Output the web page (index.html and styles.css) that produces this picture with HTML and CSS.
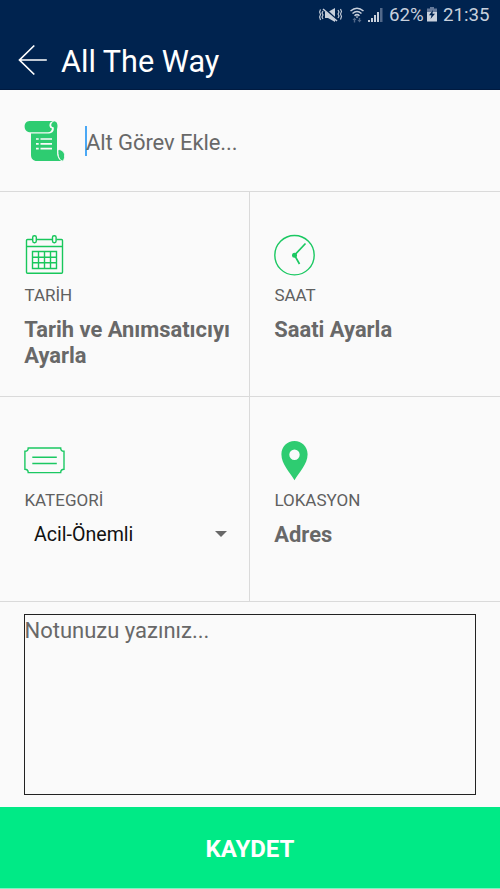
FILE: index.html
```html
<!DOCTYPE html>
<html lang="tr">
<head>
<meta charset="utf-8">
<title>All The Way</title>
<link rel="stylesheet" href="styles.css">
</head>
<body>
<div class="app">
  <header class="header">
    <div class="status">
      <svg class="mute" width="24" height="16" viewBox="0 0 24 16"><path fill="currentColor" d="M6 5h3l7-4v14l-7-4H6z"/><path stroke="#00234f" stroke-width="2" d="M5 1l14 13"/><path fill="none" stroke="currentColor" stroke-width="1.6" d="M4 2l14 12"/><path fill="none" stroke="currentColor" stroke-width="1.1" d="M4 4L3 6l1 2-1 2 1 2M1.5 2.500L.6 5l.9 2.500L.6 10l.9 3M19 3l1 2-1 2 1 2-1 2M21.500 2l1 2.500-1 2.500 1 2.500-1 3"/></svg>
      <svg class="wifi" width="14" height="16" viewBox="0 0 14 16"><g fill="none" stroke="currentColor" stroke-width="1.500"><path d="M.5 4Q7-1.500 13.500 4M2.500 6.500q4.500-4 9 0M4.500 8.700q2.500-2.200 5 0"/></g><path fill="currentColor" d="M5.500 9.500h3L7 11.200z"/><path fill="#52698a" d="M2.500 13L4.500 10.500 6.500 13H5.200v2.500H3.800V13zM7.500 13h1.300v-2h1.400v2h1.300l-2 2.500z"/></svg>
      <svg class="signal" width="15" height="15" viewBox="0 0 15 15"><path fill="currentColor" d="M0 13h2v2H0zM3 11h2v4H3zM6 8h2v7H6zM9 5h2v10H9z"/><path fill="#52698a" d="M12 1h2.500v14H12z"/></svg>
      <span class="percent">62%</span>
      <svg class="battery" width="10" height="15" viewBox="0 0 10 15"><path fill="#65799a" d="M3 0h4v1.500h3V5H0V1.500h3z"/><path fill="currentColor" d="M0 5h10v9.500H0z"/><path fill="#00234f" d="M6 3L2 8.200h2.500L3.500 12 8 6.700H5.500z"/></svg>
      <span class="clock">21:35</span>
    </div>
    <div class="titlebar">
      <svg class="back" width="30" height="32" viewBox="0 0 30 32"><path fill="none" stroke="#fff" stroke-width="1.700" d="M16.300 1.500L1.500 16l14.800 14.500M1.500 16h27.300"/></svg>
      <h1 class="title">All The Way</h1>
    </div>
  </header>
  <section class="task">
    <svg width="42" height="42" viewBox="0 0 42 42"><path fill="#2ecc71" d="M5.500 1H29q-4 1.200-3.500 5 .2 2 2.500 2.500-.5 3.700-4 3.700H5.500C-1 12.200-1 1 5.500 1z"/><path fill="#2ecc71" d="M30.500 1.300c3.300.7 3.500 5 2.500 8v20c0 6 .5 9.500 4.500 11.700H13c-4 0-6-2.500-6-6V13.500h18c4-.3 5.200-2.700 4.700-6.200-3.200.2-3.500-4.800.8-6z"/><path fill="#2ecc71" stroke="#fafafa" stroke-width="1" d="M34 29.500c4 0 6.700 2.300 6.700 6.500 0 2.500-.8 4.600-2.500 5.200-3.900-2-4.500-6.200-4.200-11.700z"/><path stroke="#fafafa" stroke-width="1.700" d="M12 19h2.700M16.500 19H28M12 23.800h2.700M16.500 23.800H28M12 28.600h2.700M16.500 28.600H28"/></svg>
    <div class="task-input"><span class="placeholder">Alt Görev Ekle...</span></div>
  </section>
  <main class="grid">
    <section class="cell">
      <svg width="42" height="42" viewBox="0 0 42 42"><g fill="none" stroke="#18c75b" stroke-width="1.400"><path d="M8.300 5.500H3.500q-1 0-1 1v31.700q0 1 1 1h34q1 0 1-1V6.500q0-1-1-1h-5M12.500 5.500h15.700M2.500 12.500h36"/><rect x="8.700" y="1.700" width="3.600" height="7" rx="1.600"/><rect x="28.500" y="1.700" width="3.600" height="7" rx="1.600"/><path d="M8.500 17.500h24v17h-24zM8.500 23.200h24M8.500 28.800h24M14.500 17.500v17M20.500 17.500v17M26.500 17.500v17"/></g></svg>
      <div class="label">TARİH</div>
      <div class="value">Tarih ve Anımsatıcıyı<br>Ayarla</div>
    </section>
    <section class="cell">
      <svg width="42" height="42" viewBox="0 0 42 42"><circle cx="20.500" cy="21.200" r="19.700" fill="none" stroke="#1bc862" stroke-width="1.400"/><path fill="none" stroke="#1bc862" stroke-width="1.700" d="M31.500 9.500L20.500 21.200l5 8.800"/><circle cx="20.500" cy="21.200" r="2.500" fill="#1bc862"/></svg>
      <div class="label">SAAT</div>
      <div class="value">Saati Ayarla</div>
    </section>
    <section class="cell lower">
      <svg width="42" height="42" viewBox="0 0 42 42"><path fill="none" stroke="#1bc862" stroke-width="1.400" d="M4.200 8h32.500c0 2.200 1.100 3.300 3.300 3.300v18c-2.200 0-3.300 1.100-3.300 3.300H4.200c0-2.200-1.100-3.300-3.300-3.300v-18c2.200 0 3.300-1.100 3.300-3.300zM8.300 17.200h24.500M8.300 23.500h24.500"/></svg>
      <div class="label">KATEGORİ</div>
      <div class="select"><span>Acil-Önemli</span><svg width="12" height="6" viewBox="0 0 12 6"><path fill="#686868" d="M0 0h12L6 6z"/></svg></div>
    </section>
    <section class="cell lower">
      <svg width="42" height="42" viewBox="0 0 42 42"><path fill="#2ecc71" fill-rule="evenodd" d="M20.500 1.100c7.300 0 13.100 5.900 13.100 13.100 0 10-8.600 18-13.100 26-4.500-8-13.100-16-13.100-26C7.400 7 13.200 1.100 20.500 1.100zM20.500 9.500a5.200 5.200 0 1 0 0 10.400 5.200 5.200 0 0 0 0-10.400z"/></svg>
      <div class="label">LOKASYON</div>
      <div class="value">Adres</div>
    </section>
  </main>
  <section class="notes"><div class="note">Notunuzu yazınız...</div></section>
  <footer class="save"><span>KAYDET</span></footer>
</div>
</body>
</html>
```
FILE: styles.css
```css
* { box-sizing: border-box; }
body { margin: 0; background: #fafafa; font-family: Roboto, sans-serif; }
svg { display: block; flex: none; }
.app { width: 500px; height: 889px; display: flex; flex-direction: column; overflow: hidden; }
.header { height: 90px; background: #00234f; border-bottom: 1px solid #001a40; }
.status { height: 30px; display: flex; align-items: center; padding: 0 10px 0 319px; color: #c8d0dc; font-size: 18.700px; line-height: 30px; }
.wifi { margin-left: 7px; }
.signal { margin-left: 4px; margin-top: -1px; }
.percent { width: 38px; margin-left: 6px; white-space: nowrap; }
.battery { margin-top: -1px; }
.clock { margin-left: 6px; }
.titlebar { height: 60px; display: flex; align-items: center; padding-left: 18px; }
.title { margin: 3px 0 0 13px; color: #fff; font-size: 30.600px; font-weight: 400; line-height: 40px; }
.task { height: 102px; display: flex; align-items: center; padding: 0 24px; border-bottom: 1px solid #dadada; }
.task-input { height: 30px; margin-left: 19px; border-left: 2px solid #4aa8f5; font-size: 22px; line-height: 33px; letter-spacing: -0.08px; color: #686868; }
.placeholder { margin-left: -1px; }
.grid { display: grid; grid-template-columns: 250px 250px; grid-template-rows: 205px 205px; }
.cell { border-bottom: 1px solid #dadada; padding: 42px 0 0 24px; }
.cell:nth-child(odd) { border-right: 1px solid #dadada; }
.cell.lower { padding-top: 43px; }
.label { margin-top: 8px; padding-left: 0.400px; font-size: 17px; line-height: 22px; color: #606060; }
.lower .label { margin-top: 7px; }
.value { margin-top: 11px; padding-left: 0.300px; font-size: 21.900px; font-weight: 700; line-height: 26px; color: #686868; white-space: nowrap; }
.select { height: 26px; margin-top: 10px; padding: 0 22px 0 10px; display: flex; align-items: center; justify-content: space-between; color: #111; font-size: 19.600px; }
.notes { height: 205px; padding: 12px 24px; }
.note { height: 181px; border: 1px solid #222; font-size: 22px; line-height: 31px; text-indent: -0.500px; color: #686868; }
.save { height: 82px; padding-top: 2px; display: flex; align-items: center; justify-content: center; background: #00ea86; border-bottom: 1px solid #80f3c2; color: #fff; font-size: 24px; font-weight: 700; }
```
